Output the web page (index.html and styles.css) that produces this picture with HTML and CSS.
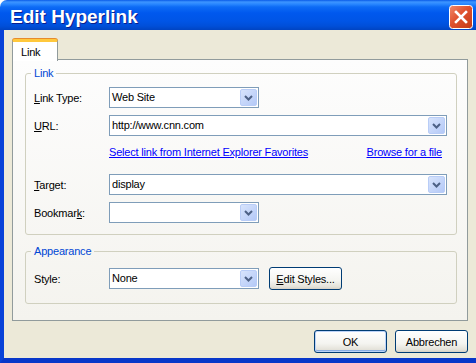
FILE: index.html
```html
<!DOCTYPE html>
<html>
<head>
	<meta charset="utf-8">
	<title>Edit Hyperlink</title>
	<link rel="stylesheet" href="styles.css">
</head>
<body>
<div class="window">

	<div class="titlebar">
		<span class="title">Edit Hyperlink</span>
		<span class="close">
			<svg width="24" height="24" viewBox="0 0 24 24">
				<defs>
					<linearGradient id="red" x1="0" y1="0" x2="1" y2="1">
						<stop offset="0" stop-color="#F08A6C"/>
						<stop offset="0.45" stop-color="#E0512E"/>
						<stop offset="1" stop-color="#C23A17"/>
					</linearGradient>
				</defs>
				<rect x="0.5" y="0.5" width="23" height="23" rx="3" fill="url(#red)" stroke="#fff"/>
				<path d="M7 7 L17 17 M17 7 L7 17" stroke="#fff" stroke-width="2.6" stroke-linecap="square"/>
			</svg>
		</span>
	</div>

	<div class="frame">
		<div class="tabs">
			<div class="tab active">Link</div>
		</div>

		<div class="panel">
			<fieldset class="group">
				<legend>Link</legend>
				<div class="form">
					<label><u>L</u>ink Type:</label>
					<div class="combo short"><span>Web Site</span><i class="drop"><svg width="17" height="17" viewBox="0 0 17 17"><path d="M5 7 L8.5 10.5 L12 7" /></svg></i></div>

					<label><u>U</u>RL:</label>
					<div class="combo"><span>http://www.cnn.com</span><i class="drop"><svg width="17" height="17" viewBox="0 0 17 17"><path d="M5 7 L8.5 10.5 L12 7" /></svg></i></div>

					<div class="links">
						<a href="#">Select link from Internet Explorer Favorites</a>
						<a href="#">Browse for a file</a>
					</div>

					<label><u>T</u>arget:</label>
					<div class="combo"><span>display</span><i class="drop"><svg width="17" height="17" viewBox="0 0 17 17"><path d="M5 7 L8.5 10.5 L12 7" /></svg></i></div>

					<label>Bookmar<u>k</u>:</label>
					<div class="combo short"><span></span><i class="drop"><svg width="17" height="17" viewBox="0 0 17 17"><path d="M5 7 L8.5 10.5 L12 7" /></svg></i></div>
				</div>
			</fieldset>

			<fieldset class="group appearance">
				<legend>Appearance</legend>
				<div class="style-row">
					<label>Style:</label>
					<div class="combo short"><span>None</span><i class="drop"><svg width="17" height="17" viewBox="0 0 17 17"><path d="M5 7 L8.5 10.5 L12 7" /></svg></i></div>
					<button class="btn"><u>E</u>dit Styles...</button>
				</div>
			</fieldset>
		</div>

		<div class="actions">
			<button class="btn default">OK</button>
			<button class="btn">Abbrechen</button>
		</div>
	</div>

</div>
</body>
</html>
```

FILE: styles.css
```css
/* Reset */

* { margin: 0; padding: 0; box-sizing: border-box; }

body {
	background-color: #ffffff;
	font-family: "Liberation Sans", Arial, sans-serif;
	font-size: 11px;
	letter-spacing: -0.2px;
	color: #000000;
	overflow: hidden;
}


/* Window */

.window {
	width: 476px;
	height: 363px;
	display: flex;
	flex-direction: column;
}

.titlebar {
	height: 30px;
	flex: none;
	display: flex;
	justify-content: space-between;
	align-items: flex-start;
	padding: 0 3px 0 10px;
	border-top-left-radius: 7px;
	background: linear-gradient(#0A5BE8 0, #3D95FF 2px, #2A88FF 4px, #0D6BF5 7px, #0058EE 13px, #0055E6 21px, #004FD9 26px, #0044C2 30px);
}

.titlebar .title {
	color: #ffffff;
	font-weight: bold;
	font-size: 19px;
	letter-spacing: 0;
	line-height: 20px;
	padding-top: 7px;
	text-shadow: 1px 1px 0 #0A1E8C;
}

.titlebar .close {
	margin-top: 5px;
	height: 24px;
}

.frame {
	flex: 1;
	background-color: #ECE9D8;
	border-left: 4px solid #0842D8;
	border-bottom: 5px solid #0837C9;
	padding: 9px 8px 0 8px;
}


/* Tabs */

.tabs {
	display: flex;
	height: 21px;
	margin-bottom: -1px;
	position: relative;
	z-index: 1;
}

.tab {
	width: 46px;
	height: 22px;
	padding: 4px 0 0 8px;
	line-height: 13px;
	background-color: #ffffff;
	border: 1px solid #919B9C;
	border-bottom: none;
	border-top: 3px solid #FFC83C;
	border-radius: 3px 3px 0 0;
	box-shadow: 0 -1px 0 #E68B2C;
}

.panel {
	border: 1px solid #919B9C;
	background: linear-gradient(#FDFDFD, #F4F3EE);
	padding: 7px 10px 16px 12px;
}


/* Group boxes */

.group {
	border: 1px solid #D0D0BF;
	border-radius: 3px;
	padding: 7px 9px 11px 8px;
}

.group legend {
	color: #0046D5;
	line-height: 13px;
	padding: 0 3px;
	margin-left: -3px;
}

.group.appearance {
	margin-top: 10px;
	padding-top: 9px;
	padding-bottom: 13px;
}

.form {
	display: grid;
	grid-template-columns: 75px 1fr;
	grid-template-rows: 21px 21px 24px 21px 21px;
	row-gap: 7px;
	align-items: center;
}

.form .links {
	grid-column: 2;
	height: 24px;
	align-self: start;
	display: flex;
	justify-content: space-between;
	padding: 3px 5px 0 0;
	line-height: 13px;
}

.links a {
	color: #0000FF;
	text-decoration: underline;
}

.style-row {
	display: flex;
	align-items: center;
	height: 23px;
}

.style-row label {
	width: 75px;
}

.style-row .btn {
	margin-left: 10px;
}


/* Combo boxes */

.combo {
	height: 21px;
	border: 1px solid #7F9DB9;
	background-color: #ffffff;
	display: flex;
	align-items: center;
	justify-content: space-between;
	padding: 0 1px 0 2px;
}

.combo.short {
	width: 150px;
}

.combo span {
	line-height: 13px;
}

.combo .drop {
	width: 17px;
	height: 17px;
	border-radius: 2px;
	border: 1px solid #B9CDF7;
	background: linear-gradient(135deg, #D8E4FC, #B4C9F7);
	display: flex;
	align-items: center;
	justify-content: center;
}

.combo .drop svg {
	display: block;
	margin: -1px;
}

.combo .drop path {
	fill: none;
	stroke: #4D6185;
	stroke-width: 2;
}


/* Buttons */

.btn {
	width: 73px;
	height: 23px;
	font-family: inherit;
	font-size: 11px;
	letter-spacing: -0.2px;
	color: #000000;
	border: 1px solid #003C74;
	border-radius: 3px;
	background: linear-gradient(#FFFFFF, #F4F4F0 60%, #E3E1D8 90%, #D6D0C5);
}

.btn.default {
	box-shadow: inset 0 0 0 1px #BCD3F8, inset 0 -1px 0 1px #89ADE4;
}

.actions {
	display: flex;
	justify-content: flex-end;
	gap: 8px;
	margin-top: 9px;
}
```
